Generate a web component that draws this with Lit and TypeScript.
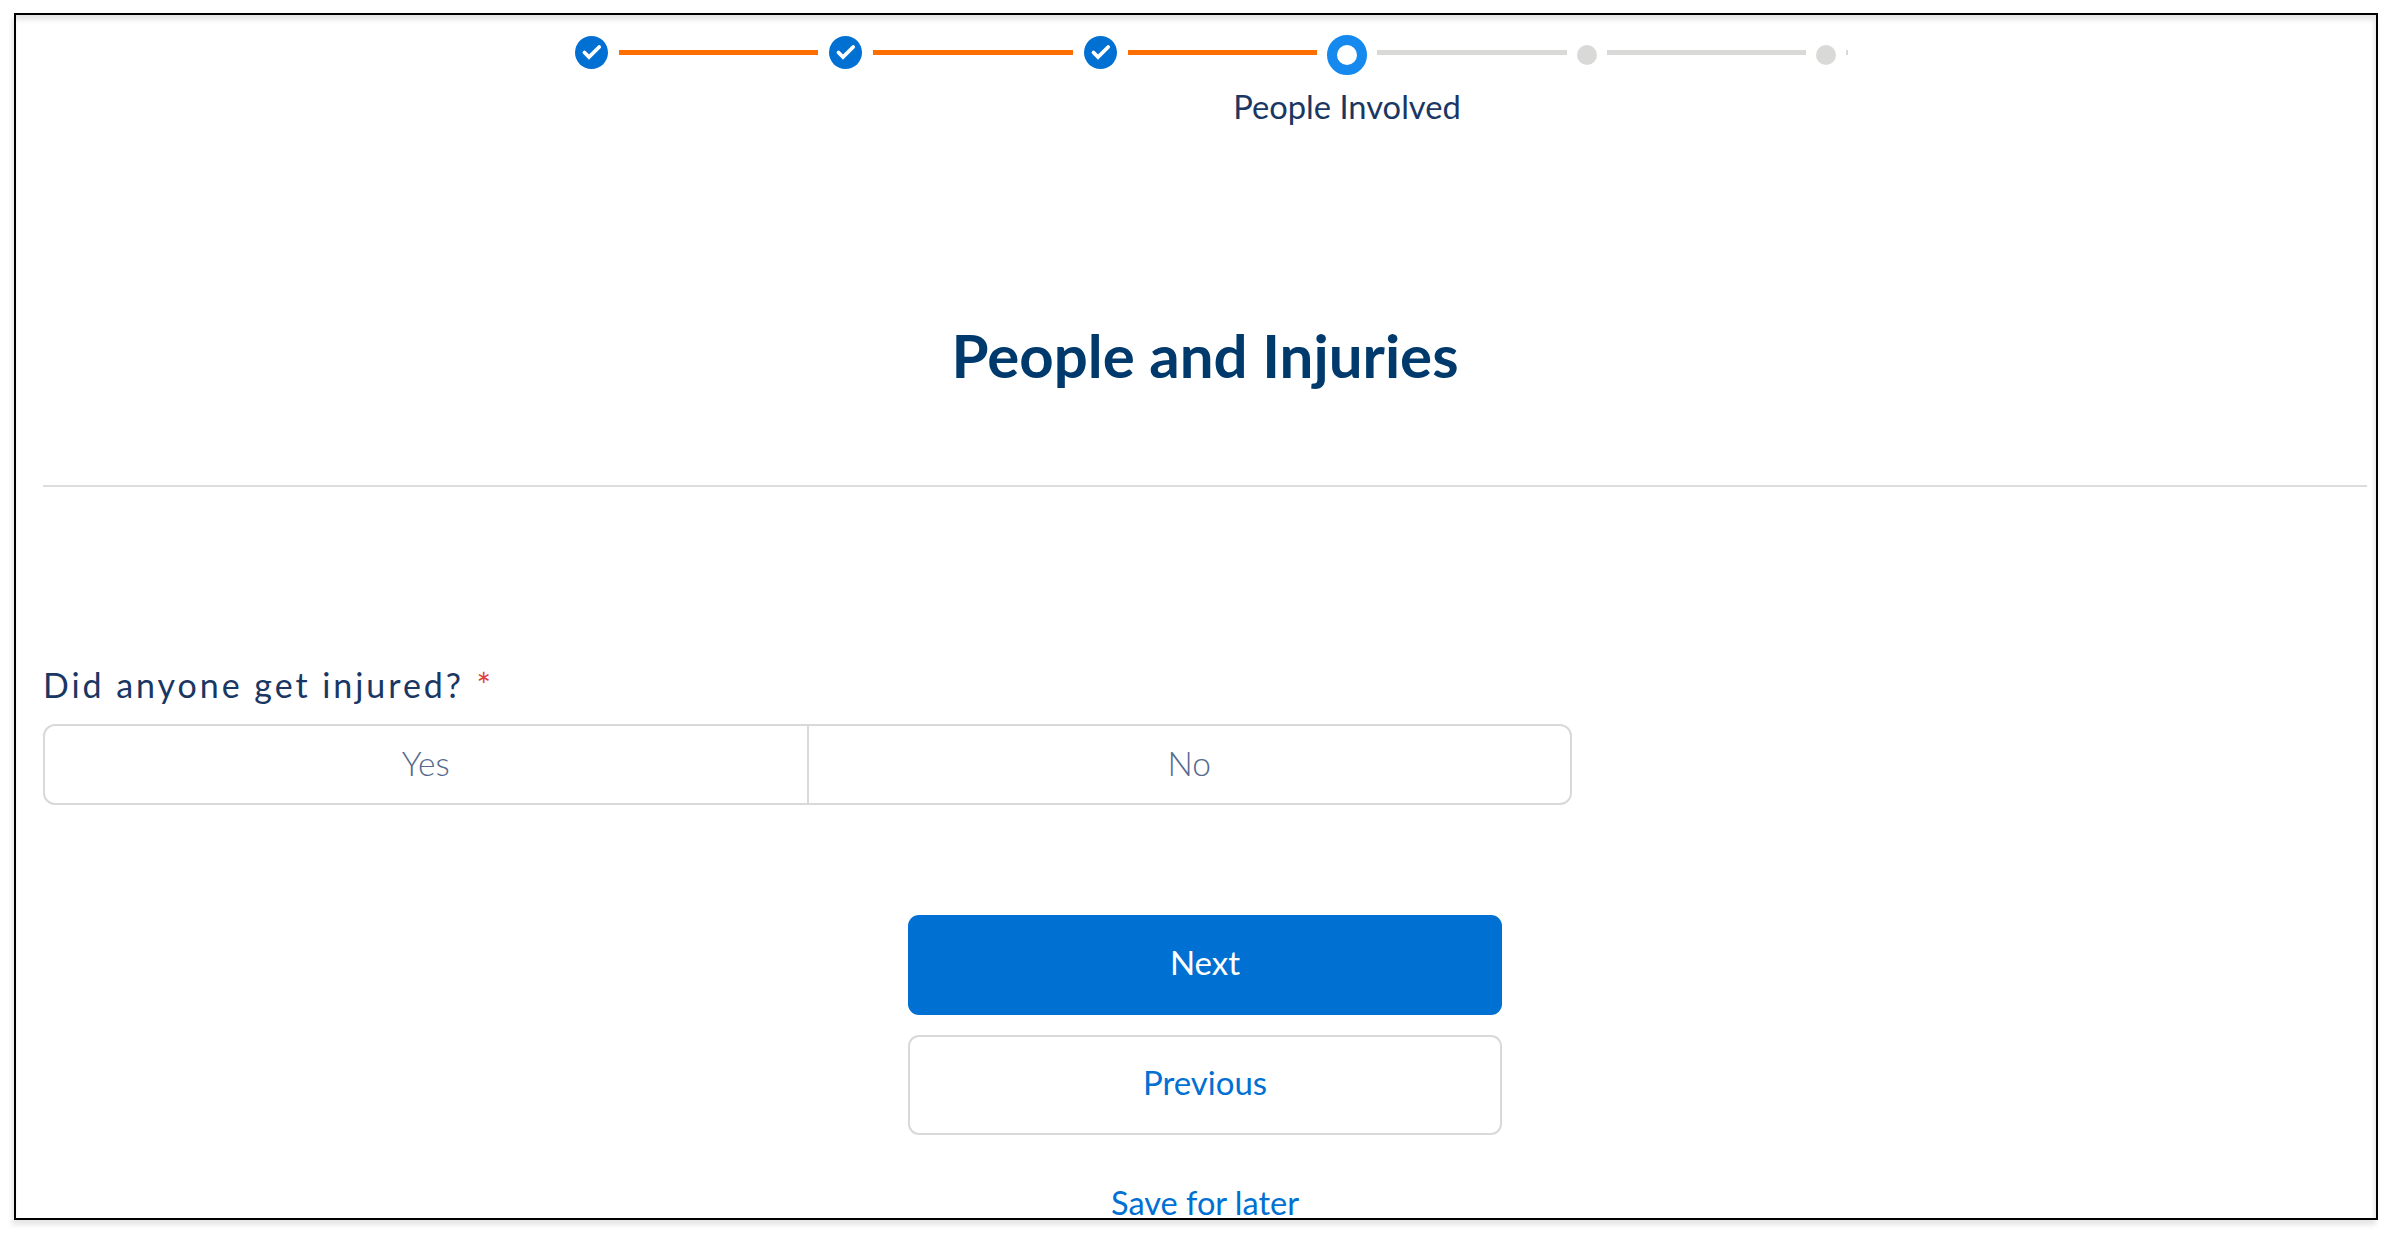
import { LitElement, html, css, svg } from "lit";
import { customElement } from "lit/decorators.js";

type Step =
  | { kind: "done" | "active" | "todo"; label?: string }
  | { kind: "line"; width: number; on: boolean };

const STEPS: Step[] = [
  { kind: "done" },
  { kind: "line", width: 199, on: true },
  { kind: "done" },
  { kind: "line", width: 200, on: true },
  { kind: "done" },
  { kind: "line", width: 189, on: true },
  { kind: "active", label: "People Involved" },
  { kind: "line", width: 190, on: false },
  { kind: "todo" },
  { kind: "line", width: 199, on: false },
  { kind: "todo" },
  { kind: "line", width: 2, on: false },
];

@customElement("app-root")
export class AppRoot extends LitElement {
  static styles = css`
    :host {
      display: block;
      height: 1234px;
      overflow: hidden;
      background: #fff;
      font-family: Lato, "Liberation Sans", sans-serif;
      color: #1a3763;
    }
    .frame {
      box-sizing: border-box;
      width: 2364px;
      height: 1207px;
      margin: 13px 0 0 14px;
      border: 2px solid #000;
      background: #fff;
      box-shadow: -2px 5px 5px rgba(0, 0, 0, 0.1), inset -2px 5px 5px rgba(0, 0, 0, 0.1);
      overflow: hidden;
      padding: 21px 9px 0 27px;
    }
    .stepper {
      display: flex;
      align-items: flex-start;
      gap: 10px;
      padding-left: 531px;
      height: 76px;
    }
    .step {
      display: flex;
      flex-direction: column;
      align-items: center;
      flex: none;
    }
    .step.current {
      width: 40px;
    }
    .done {
      width: 33px;
      height: 33px;
      margin: 0 1px;
      display: block;
    }
    .ring {
      box-sizing: border-box;
      width: 40px;
      height: 40px;
      flex: none;
      margin-top: -1px;
      border: 10px solid #1589ee;
      border-radius: 50%;
    }
    .dot {
      width: 20px;
      height: 20px;
      margin-top: 9px;
      border-radius: 50%;
      background: #d9d9d7;
    }
    .line {
      flex: none;
      height: 5px;
      margin-top: 14px;
      background: #d9d9d7;
    }
    .line.on {
      background: #ff6f00;
    }
    .step-label {
      margin-top: 13px;
      font-size: 32.7px;
      line-height: 38px;
      white-space: nowrap;
    }
    h1 {
      margin: 0;
      padding: 207px 0 94px;
      text-align: center;
      font-size: 60px;
      line-height: 72px;
      font-weight: 700;
      color: #00396b;
      border-bottom: 2px solid #dddddd;
    }
    .question {
      margin-top: 178px;
      font-size: 34px;
      line-height: 40px;
      letter-spacing: 2.95px;
    }
    .question span {
      color: #e0403a;
      margin-left: 1px;
    }
    .segments {
      box-sizing: border-box;
      display: flex;
      width: 1529px;
      height: 81px;
      margin-top: 19px;
      border: 2px solid #d9d9d9;
      border-radius: 12px;
    }
    .segment {
      flex: 1;
      display: flex;
      align-items: center;
      justify-content: center;
      padding-bottom: 3px;
      font-size: 33.5px;
      font-weight: 300;
      color: #54698d;
    }
    .segment + .segment {
      border-left: 2px solid #d9d9d9;
    }
    .actions {
      display: flex;
      flex-direction: column;
      align-items: center;
      margin-top: 110px;
      gap: 20px;
    }
    .btn {
      box-sizing: border-box;
      width: 594px;
      height: 100px;
      border-radius: 11px;
      display: flex;
      align-items: center;
      justify-content: center;
      padding-bottom: 6px;
      font-size: 33px;
    }
    .primary {
      background: #0070d2;
      color: #fff;
    }
    .secondary {
      background: #fff;
      border: 2px solid #d9d9d9;
      color: #0070d2;
    }
    .link {
      margin-top: 29px;
      font-size: 32.5px;
      line-height: 38px;
      color: #0070d2;
    }
  `;

  private renderStep(s: Step) {
    if (s.kind === "line") {
      return html`<div class="line ${s.on ? "on" : ""}" style="width:${s.width}px"></div>`;
    }
    if (s.kind === "done") {
      return html`<div class="step">
        <svg class="done" viewBox="0 0 33 33">
          <circle cx="16.5" cy="16.5" r="16.5" fill="#0070d2"></circle>
          ${svg`<path d="M9.5 16.5l4.5 4.5L24.2 11" fill="none" stroke="#fff" stroke-width="3.8" stroke-linecap="round" stroke-linejoin="miter"></path>`}
        </svg>
      </div>`;
    }
    if (s.kind === "active") {
      return html`<div class="step current">
        <div class="ring"></div>
        <div class="step-label">${s.label}</div>
      </div>`;
    }
    return html`<div class="step"><div class="dot"></div></div>`;
  }

  render() {
    return html`<div class="frame">
      <div class="stepper">${STEPS.map((s) => this.renderStep(s))}</div>
      <h1>People and Injuries</h1>
      <div class="question">Did anyone get injured? <span>*</span></div>
      <div class="segments">
        <div class="segment">Yes</div>
        <div class="segment">No</div>
      </div>
      <div class="actions">
        <div class="btn primary">Next</div>
        <div class="btn secondary">Previous</div>
        <div class="link">Save for later</div>
      </div>
    </div>`;
  }
}
